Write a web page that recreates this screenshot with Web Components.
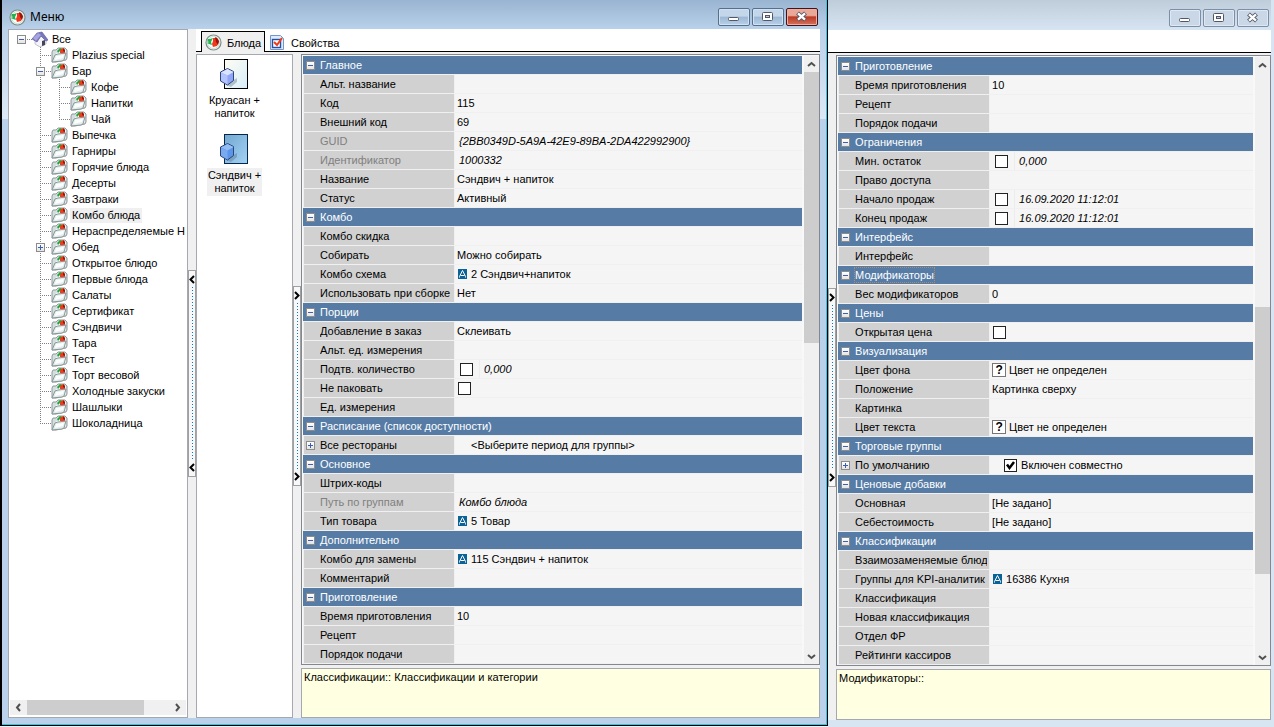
<!DOCTYPE html>
<html lang="ru">
<head>
<meta charset="utf-8">
<title>Меню</title>
<style>
  * { box-sizing: border-box; }
  body {
    margin: 0; min-height: 100vh; background: #f0f0f0; color: #000;
    font: 11px/16px "Liberation Sans", Arial, sans-serif;
    display: grid; grid-template-columns: 65% minmax(0, 1fr);
  }
  .fill { flex: 1; min-width: 0; }
  .dishes { flex: 0 0 97px; }
  .tree { flex: 0 0 180px; }
</style>
</head>
<body>

<app-window heading="Меню" active>
  <app-panel class="tree" pad>
    <tree-node label="Все" icon="home" open root>
      <tree-node label="Plazius special"></tree-node>
      <tree-node label="Бар" open>
        <tree-node label="Кофе"></tree-node>
        <tree-node label="Напитки"></tree-node>
        <tree-node label="Чай" last></tree-node>
      </tree-node>
      <tree-node label="Выпечка"></tree-node>
      <tree-node label="Гарниры"></tree-node>
      <tree-node label="Горячие блюда"></tree-node>
      <tree-node label="Десерты"></tree-node>
      <tree-node label="Завтраки"></tree-node>
      <tree-node label="Комбо блюда" selected></tree-node>
      <tree-node label="Нераспределяемые Н"></tree-node>
      <tree-node label="Обед" closed></tree-node>
      <tree-node label="Открытое блюдо"></tree-node>
      <tree-node label="Первые блюда"></tree-node>
      <tree-node label="Салаты"></tree-node>
      <tree-node label="Сертификат"></tree-node>
      <tree-node label="Сэндвичи"></tree-node>
      <tree-node label="Тара"></tree-node>
      <tree-node label="Тест"></tree-node>
      <tree-node label="Торт весовой"></tree-node>
      <tree-node label="Холодные закуски"></tree-node>
      <tree-node label="Шашлыки"></tree-node>
      <tree-node label="Шоколадница" last></tree-node>
    </tree-node>
    <scroll-bar slot="footer" horizontal before="0" thumb="117" after="25"></scroll-bar>
  </app-panel>
  <split-handle direction="left"></split-handle>
  <tab-frame class="fill">
    <tab-button slot="tabs" icon="dish" current>Блюда</tab-button>
    <tab-button slot="tabs" icon="check">Свойства</tab-button>
    <app-panel class="dishes">
      <dish-item first="Круасан +" second="напиток"></dish-item>
      <dish-item first="Сэндвич +" second="напиток" selected></dish-item>
    </app-panel>
    <split-handle direction="right"></split-handle>
    <property-page class="fill" source="main" before="0" thumb="271" after="305">Классификации:: Классификации и категории</property-page>
  </tab-frame>
</app-window>

<app-window>
  <tab-frame class="fill">
    <split-handle direction="right" narrow></split-handle>
    <property-page class="fill" source="more" before="234" thumb="267" after="75">Модификаторы::</property-page>
  </tab-frame>
</app-window>

<script>
const ICONS = {
  dish: `<svg width="17" height="17" viewBox="0 0 17 17"><circle cx="8.500" cy="8.500" r="7.500" fill="#f4fbf6" stroke="#7f8c88" stroke-width="1.200"/><circle cx="8.500" cy="8.500" r="6" fill="#fff" stroke="#c2e2d2"/><path d="M2 5h3l3-1-1 2-1 2 1 3-3-1-2-1 2-1-2-1 1-1z" fill="#22b14c"/><path d="M8 4l4 0 2 4-2 4-4 1-1-3 1-3z" fill="#f0381e"/><path d="M10 3l2 1 2 3-1 4-2-3z" fill="#a01208"/></svg>`,
  home: `<svg width="16" height="16" viewBox="0 0 16 16"><path d="M3 8v5l5 3 6-3V7L9 4z" fill="#f4f4fa" stroke="#9a9aae" stroke-width=".6"/><path d="M0 8l5-6 5-1 6 8-2 1-5-5-4 6z" fill="#7878bd" stroke="#55558f" stroke-width=".6"/><path d="M1 7l5-5 3 2-5 6z" fill="#a5a5e4"/><path d="M10 10l3-1v5l-3 1z" fill="#44445c"/></svg>`,
  folder: `<svg width="17" height="16" viewBox="0 0 17 16"><path d="M1 5l1-2h3l2-2h7l2 2v8l-1 2-10 2H1z" fill="#d5dede" stroke="#8f9a9b"/><path d="M5 7l3-5h6l1 2v7l-2 2-8 1z" fill="#f6fafa"/><path d="M6 4l3-3 3 1-1 3-2-1-2 2z" fill="#1fa83c"/><path d="M9 3l3-2 2 2v4h-3l-2-1z" fill="#f23a18"/><path d="M12 1l2 2v2l-2-1z" fill="#9a150c"/><path d="M1 15L4 8l3-1 8-1-2 7-2 1z" fill="#e4ecec" stroke="#8b9798"/><path d="M5 9l8-1-1 3-8 2z" fill="#fbfefe"/></svg>`,
  check: `<svg width="14" height="15" viewBox="0 0 14 15"><path d="M.5.500h10l3 3v11H.5z" fill="#dfeafa" stroke="#6f98d0"/><rect x="2.500" y="4.500" width="8" height="8" fill="#fff" stroke="#2450a0" stroke-width="1.400"/><path d="M4 7l3 3 5-7" fill="none" stroke="#f03c14" stroke-width="2"/></svg>`,
  min: `<svg width="12" height="12" viewBox="0 0 12 12"><rect x=".5" y="6.500" width="10" height="3" rx="1" fill="#fff" stroke="#535666"/></svg>`,
  max: `<svg width="12" height="12" viewBox="0 0 12 12"><rect x=".5" y="1.500" width="10" height="8" rx="1" fill="#fff" stroke="#535666"/><rect x="3.500" y="4.500" width="4" height="2" fill="#b8cbe0" stroke="#535666"/></svg>`,
  close: `<svg width="12" height="12" viewBox="0 0 12 12"><path d="M1.500 2l8 7M9.500 2L1.500 9" stroke="#535666" stroke-width="4.200"/><path d="M2 2.400l7 6.200M9 2.400L2 8.600" stroke="#fff" stroke-width="2.400"/></svg>`,
  less: `<svg width="6" height="9" viewBox="0 0 6 9" fill="none" stroke="#000" stroke-width="2"><path d="M5 1L1.500 4.500 5 8"/></svg>`,
  more: `<svg width="6" height="9" viewBox="0 0 6 9" fill="none" stroke="#000" stroke-width="2"><path d="M1 1L4.500 4.500 1 8"/></svg>`
};
const BASE = `*{box-sizing:border-box}button{font:inherit;color:inherit;padding:0;margin:0}svg{display:block;flex:none}`;

function define(name, render) {
  customElements.define(name, class extends HTMLElement {
    connectedCallback() {
      if (this.shadowRoot) return;
      const t = document.createElement('template');
      t.innerHTML = render(this);
      this.attachShadow({ mode: 'open' }).append(t.content.cloneNode(true));
    }
  });
}

const toggle = (open, label) => `<toggle-box ${open ? '' : 'plus'} label="${label}"></toggle-box>`;

define('toggle-box', el => `<style>${BASE}
  :host{display:block;flex:none;width:9px;height:9px}
  button{display:block;width:9px;height:9px;border:1px solid #8c8c8c;
    background:linear-gradient(#3d5fae,#3d5fae) center/5px 1px no-repeat,linear-gradient(#fff,#e4e4e4)}
  :host([plus]) button{background:linear-gradient(#3d5fae,#3d5fae) center/5px 1px no-repeat,
    linear-gradient(#3d5fae,#3d5fae) center/1px 5px no-repeat,linear-gradient(#fff,#e4e4e4)}
  </style><button type="button" aria-label="${el.getAttribute('label')}"></button>`);

define('app-window', el => {
  const on = el.hasAttribute('active');
  return `<style>${BASE}
  :host{display:flex;flex-direction:column;min-width:0;background:#d7e4f2;padding:0 3px 7px 0}
  :host([active]){margin-bottom:1px;padding:0 7px 7px 6px;border:1px solid #000;border-width:0 1px 1px 2px;
    background:linear-gradient(#99b4d1 0,#b9d1ea 29px,#dde8f5 119px,#b9d1ea 119px);
    box-shadow:inset -1px -1px #2bc8e8}
  header{display:flex;align-items:flex-start;height:30px;padding:9px 2px 0 0;gap:2px;
    background:linear-gradient(#bfcddb,#d7e4f2)}
  :host([active]) header{height:29px;padding:8px 2px 0 1px;background:linear-gradient(#99b4d1,#b9d1ea)}
  h1{flex:1;display:flex;align-items:center;gap:4px;height:18px;margin:0;font:12px/18px "Noto Sans","Open Sans",sans-serif}
  header button{display:grid;place-items:center;width:32px;height:18px;border:1px solid #7d8ea8;border-radius:2px;
    background:#c9d7e6;box-shadow:inset 0 0 0 1px #dfe9f3}
  :host([active]) header button{border-color:#54708f;background:linear-gradient(#c3d6ea 45%,#9cb7d4 50%,#b8d0e8);box-shadow:inset 0 0 0 1px #d3e2f1}
  :host([active]) header .x{border-color:#45121c;background:linear-gradient(#e9a898 40%,#bc3a26 50%,#d3745c);box-shadow:inset 0 0 0 1px #e9b0a3}
  main{flex:1;display:flex;min-height:0;background:#f0f0f0}
  </style>
  <header><h1>${on ? ICONS.dish + '<span>' + el.getAttribute('heading') + '</span>' : ''}</h1>
  <button type="button" aria-label="Свернуть">${ICONS.min}</button>
  <button type="button" aria-label="Развернуть">${ICONS.max}</button>
  <button type="button" class="x" aria-label="Закрыть">${ICONS.close}</button></header>
  <main><slot></slot></main>`;
});

define('app-panel', () => `<style>${BASE}
  :host{display:flex;flex-direction:column;justify-content:space-between;overflow:hidden;background:#fff;border:1px solid #a6a8b0}
  :host([pad]){padding:1px}
  </style><div><slot></slot></div><slot name="footer"></slot>`);

define('tree-node', el => {
  const has = el.hasAttribute('open') || el.hasAttribute('closed');
  const dots = 'repeating-linear-gradient(to right,#808080 0 1px,transparent 1px 2px)';
  return `<style>${BASE}
  :host{display:block;white-space:nowrap;
    background:repeating-linear-gradient(#808080 0 1px,transparent 1px 2px) 9px 0/1px 100% no-repeat}
  :host([last]){background-size:1px 8px}
  :host([root]){background:none;padding-left:2px}
  .row{display:flex;height:16px;align-items:center}
  .lead{flex:none;width:20px;height:16px;padding:4px 0 0 5px;background:${dots} 9px 8px/11px 1px no-repeat}
  .text{height:15px;line-height:15px;padding:0 2px;margin-left:2px}
  :host([selected]) .text{background:#f0f0f0}
  .kids{padding-left:19px}
  </style><div class="row"><div class="lead">${has ? toggle(el.hasAttribute('open'), el.getAttribute('label')) : ''}</div>
  ${ICONS[el.getAttribute('icon') || 'folder']}<span class="text">${el.getAttribute('label')}</span></div>
  <div class="kids"><slot></slot></div>`;
});

define('scroll-bar', el => {
  const h = el.hasAttribute('horizontal');
  const g = n => `flex:${el.getAttribute(n)} 1 0`;
  const arrow = p => `<svg width="9" height="9" viewBox="0 0 9 9"><path d="${p}" fill="none" stroke="#505050" stroke-width="2"/></svg>`;
  return `<style>${BASE}
  :host{display:flex;flex:none;flex-direction:${h ? 'row' : 'column'};background:#f0f0f0;${h ? 'height:15px;margin-bottom:1px' : 'width:15px'}}
  button{display:grid;place-items:center;border:0;background:none;flex:0 0 ${h ? 17 : 16}px}
  .thumb{background:#cdcdcd}
  </style>
  <button type="button" aria-label="Назад">${arrow(h ? 'M6 1L3 4.500 6 8' : 'M1 6L4.500 3 8 6')}</button>
  <div style="${g('before')}"></div><div class="thumb" style="${g('thumb')}"></div><div style="${g('after')}"></div>
  <button type="button" aria-label="Вперёд">${arrow(h ? 'M3 1L6 4.500 3 8' : 'M1 3L4.500 6 8 3')}</button>`;
});

define('split-handle', el => {
  const i = ICONS[el.getAttribute('direction') === 'left' ? 'less' : 'more'];
  return `<style>${BASE}
  :host{display:flex;align-items:center;flex:0 0 8px;background:#f0f0f0}
  :host([narrow]){flex-basis:7px}
  button{display:flex;flex-direction:column;align-items:center;justify-content:space-between;width:100%;height:30%;
    padding:4px 0;border:1px solid #a0a0a0;background:#f8f8f8}
  i{flex:1;width:1px;margin:3px 0;background:repeating-linear-gradient(#0078d7 0 1px,transparent 1px 3px)}
  </style><button type="button" aria-label="Скрыть панель">${i}<i></i>${i}</button>`;
});

define('tab-frame', () => `<style>${BASE}
  :host{display:flex;flex-direction:column}
  nav{display:flex;height:23px;padding:2px 0 0 5px;background:linear-gradient(#000,#000) bottom/100% 1px no-repeat #fff;margin-bottom:2px}
  section{flex:1;display:flex}
  </style><nav><slot name="tabs"></slot></nav><section><slot></slot></section>`);

define('tab-button', el => `<style>${BASE}
  :host{display:block}
  button{display:flex;align-items:center;gap:7px;height:21px;padding:0 4px;border:1px solid transparent;border-width:1px 1px 0;background:none}
  :host([current]) button{gap:5px;padding:0 3px;border-color:#000;background:#f0f0f0}
  span{padding-top:2px}
  </style><button type="button">${ICONS[el.getAttribute('icon')]}<span><slot></slot></span></button>`);

define('dish-item', el => {
  const s = el.hasAttribute('selected');
  return `<style>${BASE}
  :host{display:flex;flex-direction:column;align-items:center;height:75px;padding:4px 20px 0 0;line-height:13px;text-align:center}
  span{margin-top:3px;padding:1px 1px}
  :host([selected]) span{background:#f0f0f0}
  </style>
  <svg width="30" height="31" viewBox="0 0 30 31">
    <defs><linearGradient id="p" x1="0" y1="0" x2="1" y2="1"><stop offset="0" stop-color="${s ? '#74a8d0' : '#fffdf2'}"/><stop offset="1" stop-color="${s ? '#a3d2f5' : '#d8eefb'}"/></linearGradient></defs>
    <rect x="4.500" y=".5" width="23" height="29" fill="url(#p)" stroke="${s ? '#06264a' : '#000'}"/>
    <path d="M6 26l5 2 6-5v-4z" fill="#5b7288" opacity=".4"/>
    <path d="M7.500 9.500l6 3v9l-6 4.500-7-4V13z" fill="${s ? '#5b95ea' : '#8fa5f7'}" stroke="#2e4678"/>
    <path d="M1 13.500l6.500-3.500 6 3-6 3.500z" fill="${s ? '#93bdf5' : '#dbe3ff'}"/><path d="M1 14l6.500 2.500v9L1 21.500z" fill="${s ? '#79aaf0' : '#b4c3fc'}"/>
  </svg>
  <span>${el.getAttribute('first')}<br>${el.getAttribute('second')}</span>`;
});

/* Rows: ['#', group] opens a group; [label, kind, value] is a property. */
const DATA = {
  main: [
    ['#', 'Главное'], ['Альт. название'], ['Код', '', '115'], ['Внешний код', '', '69'],
    ['GUID', 'ro', '{2BB0349D-5A9A-42E9-89BA-2DA422992900}'], ['Идентификатор', 'ro', '1000332'],
    ['Название', '', 'Сэндвич + напиток'], ['Статус', '', 'Активный'],
    ['#', 'Комбо'], ['Комбо скидка'], ['Собирать', '', 'Можно собирать'], ['Комбо схема', 'ref', '2 Сэндвич+напиток'], ['Использовать при сборке', '', 'Нет'],
    ['#', 'Порции'], ['Добавление в заказ', '', 'Склеивать'], ['Альт. ед. измерения'], ['Подтв. количество', 'opt', '0,000'], ['Не паковать', 'box', ''], ['Ед. измерения'],
    ['#', 'Расписание (список доступности)'], ['Все рестораны', 'sub', '&lt;Выберите период для группы&gt;'],
    ['#', 'Основное'], ['Штрих-коды'], ['Путь по группам', 'ro', 'Комбо блюда'], ['Тип товара', 'ref', '5 Товар'],
    ['#', 'Дополнительно'], ['Комбо для замены', 'ref', '115 Сэндвич + напиток'], ['Комментарий'],
    ['#', 'Приготовление'], ['Время приготовления', '', '10'], ['Рецепт'], ['Порядок подачи']
  ],
  more: [
    ['#', 'Приготовление'], ['Время приготовления', '', '10'], ['Рецепт'], ['Порядок подачи'],
    ['#', 'Ограничения'], ['Мин. остаток', 'opt', '0,000'], ['Право доступа'], ['Начало продаж', 'opt', '16.09.2020 11:12:01'], ['Конец продаж', 'opt', '16.09.2020 11:12:01'],
    ['#', 'Интерфейс'], ['Интерфейс'],
    ['#', 'Модификаторы', 'focus'], ['Вес модификаторов', '', '0'],
    ['#', 'Цены'], ['Открытая цена', 'box', ''],
    ['#', 'Визуализация'], ['Цвет фона', 'color', 'Цвет не определен'], ['Положение', '', 'Картинка сверху'], ['Картинка'], ['Цвет текста', 'color', 'Цвет не определен'],
    ['#', 'Торговые группы'], ['По умолчанию', 'subbox', 'Включен совместно'],
    ['#', 'Ценовые добавки'], ['Основная', '', '[Не задано]'], ['Себестоимость', '', '[Не задано]'],
    ['#', 'Классификации'], ['Взаимозаменяемые блюд'], ['Группы для KPI-аналитик', 'ref', '16386 Кухня'], ['Классификация'], ['Новая классификация'], ['Отдел ФР'], ['Рейтинги кассиров']
  ]
};

const REF = `<svg width="9" height="10" viewBox="0 0 9 10"><rect width="9" height="10" fill="#0a6296"/><path d="M1.500 8.500V7.500L4.500 1.500 7.500 7.500V8.500M2.500 6.500H6.500" fill="none" stroke="#fff"/></svg>`;
function value(kind, v, id) {
  switch (kind) {
    case 'ro': return `<em>${v}</em>`;
    case 'ref': return `${REF}<span>${v}</span>`;
    case 'opt': return `<input type="checkbox" id="${id}"><em class="part">${v}</em>`;
    case 'box': return `<input type="checkbox" id="${id}">`;
    case 'color': return `<b>?</b><span>${v}</span>`;
    case 'sub': return `<span>${v}</span>`;
    case 'subbox': return `<input type="checkbox" checked id="${id}"><label for="${id}">${v}</label>`;
    default: return v ? `<span>${v}</span>` : '';
  }
}

define('property-grid', el => `<style>${BASE}
  :host{display:block;flex:1;min-width:0}
  table{width:100%;table-layout:fixed;border-collapse:separate;border-spacing:0;line-height:18px}
  .names{width:151px}
  th,td{height:19px;padding:0;text-align:left;font-weight:normal;border-bottom:1px solid #f0f0f0;white-space:nowrap;overflow:hidden}
  .group th{background:#567ca6;background-clip:padding-box;color:#fff}
  .prop th{background:#d1d1d1;background-clip:padding-box;border-left:1px solid #f0f0f0}
  td{background:#f5f5f5;background-clip:padding-box;border-left:1px solid #f0f0f0}
  .cell{display:flex;align-items:center;height:18px;padding-left:3px;gap:5px}
  .cell .name{flex:1;overflow:hidden;margin-right:2px}
  .prop .cell.head{padding-left:2px}
  .gap{flex:none;width:9px}
  .val{display:flex;align-items:center;height:18px;padding-left:2px}
  .ro{padding-left:4px}.ro-name{color:#808080}
  .ref{gap:4px;padding-left:3px}
  .opt{padding-left:5px;gap:6px}.box{padding-left:3px}.sub{padding-left:16px}
  .subbox{padding-left:14px;gap:4px}.color{gap:3px}
  .part{padding-left:4px;border-left:1px solid #ececec}
  .focus{line-height:14px;outline:1px dotted #b98a5e}
  input{appearance:none;flex:none;width:13px;height:13px;margin:0;border:1px solid #222;background:#fff}
  input:checked{background:#fff url('data:image/svg+xml,<svg xmlns="http://www.w3.org/2000/svg" viewBox="0 0 11 11"><path d="M2 4.500L4.500 8 9 2" fill="none" stroke="black" stroke-width="2.500"/></svg>')}
  b{width:14px;height:14px;border:1px solid #777;background:#fff;text-align:center;line-height:12px;font-size:12px}
  </style><table><colgroup><col class="names"><col></colgroup><tbody>${DATA[el.getAttribute('source')].map((r, i) => {
    if (r[0] === '#') return `<tr class="group"><th colspan="2" scope="colgroup"><div class="cell">${toggle(true, r[1])}<span class="${r[2] || ''}">${r[1]}</span></div></th></tr>`;
    const [n, k = '', v = ''] = r, id = 'f' + i, sub = k.startsWith('sub');
    const name = k === 'opt' || k === 'box' ? `<label for="${id}">${n}</label>` : n;
    return `<tr class="prop"><th scope="row"><div class="cell head">${sub ? toggle(false, n) : '<span class="gap"></span>'}<span class="name ${k}-name">${name}</span></div></th><td><div class="val ${k}">${value(k, v, id)}</div></td></tr>`;
  }).join('')}</tbody></table>`);

define('property-page', el => {
  const a = n => `${n}="${el.getAttribute(n)}"`;
  return `<style>${BASE}
  :host{display:flex;flex-direction:column;gap:3px}
  .grid{display:flex;gap:2px;padding:1px 0 0 1px;border:1px solid #828790;background:#f8f8f8}
  aside{flex:1;min-height:50px;padding:0 2px;background:#ffffe1;border:1px solid #a6a8b0}
  </style><div class="grid"><property-grid ${a('source')}></property-grid>
  <scroll-bar ${a('before')} ${a('thumb')} ${a('after')}></scroll-bar></div><aside><slot></slot></aside>`;
});
</script>
</body>
</html>
